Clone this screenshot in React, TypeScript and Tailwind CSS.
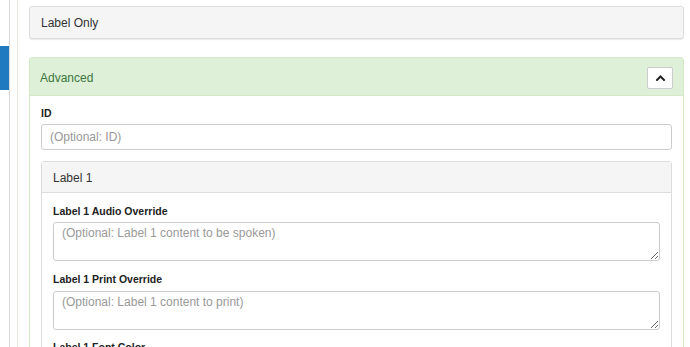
import React from "react";

function ChevronUp() {
  return (
    <svg width="9" height="6" viewBox="0 0 9 6" fill="none">
      <polyline points="1,5 4.5,1.5 8,5" stroke="#222" strokeWidth="2" strokeLinecap="square" />
    </svg>
  );
}

export default function App() {
  return (
    <div
      className="flex h-[347px] w-[690px] overflow-hidden bg-white text-[#333]"
      style={{ fontFamily: '"Liberation Sans", Arial, sans-serif' }}
    >
      {/* left sidebar edge */}
      <div className="w-[10px] shrink-0 border-r border-[#d9d9d9]">
        <div className="mt-[46px] h-[44px] w-[9px] bg-[#1f7ac0]" />
      </div>
      <div className="w-[7px] shrink-0" />
      <div className="flex-1 border-l border-[#e6ebe3] pl-[11px] pr-[6px] pt-[6px]">
        {/* Label Only panel */}
        <div className="rounded-[3px] border border-[#dddddd] bg-[#f5f5f5] shadow-[0_1px_1px_rgba(0,0,0,0.08)]">
          <div className="flex h-[31px] items-center px-[11px] pt-[1px] text-[12px]">Label Only</div>
        </div>

        {/* Advanced panel */}
        <div className="mt-[18px] rounded-t-[3px] border border-[#d6e9c6] bg-white">
          <div className="flex h-[38px] items-center justify-between border-b border-[#d6e9c6] bg-[#dff0d8] px-[10px] pt-[2px] text-[12px] text-[#3c763d]">
            <span>Advanced</span>
            <button className="flex h-[22px] w-[26px] items-center justify-center rounded-[2px] border border-[#cccccc] bg-white">
              <ChevronUp />
            </button>
          </div>
          <div className="px-[11px] pt-[11px]">
            <div className="h-[13px] text-[10.5px] font-bold leading-[13px] text-[#222]">ID</div>
            <input
              className="mt-[4px] block h-[26px] w-full rounded-[3px] border border-[#cccccc] px-[8px] text-[12px] outline-none placeholder:text-[#999]"
              placeholder="(Optional: ID)"
            />
            {/* Label 1 panel */}
            <div className="mt-[11px] rounded-t-[3px] border border-[#dddddd]">
              <div className="flex h-[31px] items-center border-b border-[#dddddd] bg-[#f5f5f5] px-[11px] pt-[1px] text-[12px]">
                Label 1
              </div>
              <div className="px-[11px] pt-[12px]">
                <div className="h-[13px] text-[10.5px] font-bold leading-[13px] text-[#222]">
                  Label 1 Audio Override
                </div>
                <textarea
                  className="mt-[4px] block h-[39px] w-full rounded-[3px] border border-[#cccccc] px-[8px] py-[3px] text-[12px] leading-[15px] outline-none placeholder:text-[#999]"
                  placeholder="(Optional: Label 1 content to be spoken)"
                />
                <div className="mt-[12px] h-[13px] text-[10.5px] font-bold leading-[13px] text-[#222]">
                  Label 1 Print Override
                </div>
                <textarea
                  className="mt-[5px] block h-[39px] w-full rounded-[3px] border border-[#cccccc] px-[8px] py-[3px] text-[12px] leading-[15px] outline-none placeholder:text-[#999]"
                  placeholder="(Optional: Label 1 content to print)"
                />
                <div className="mt-[11px] h-[13px] text-[10.5px] font-bold leading-[13px] text-[#222]">
                  Label 1 Font Color
                </div>
              </div>
            </div>
          </div>
        </div>
      </div>
    </div>
  );
}
